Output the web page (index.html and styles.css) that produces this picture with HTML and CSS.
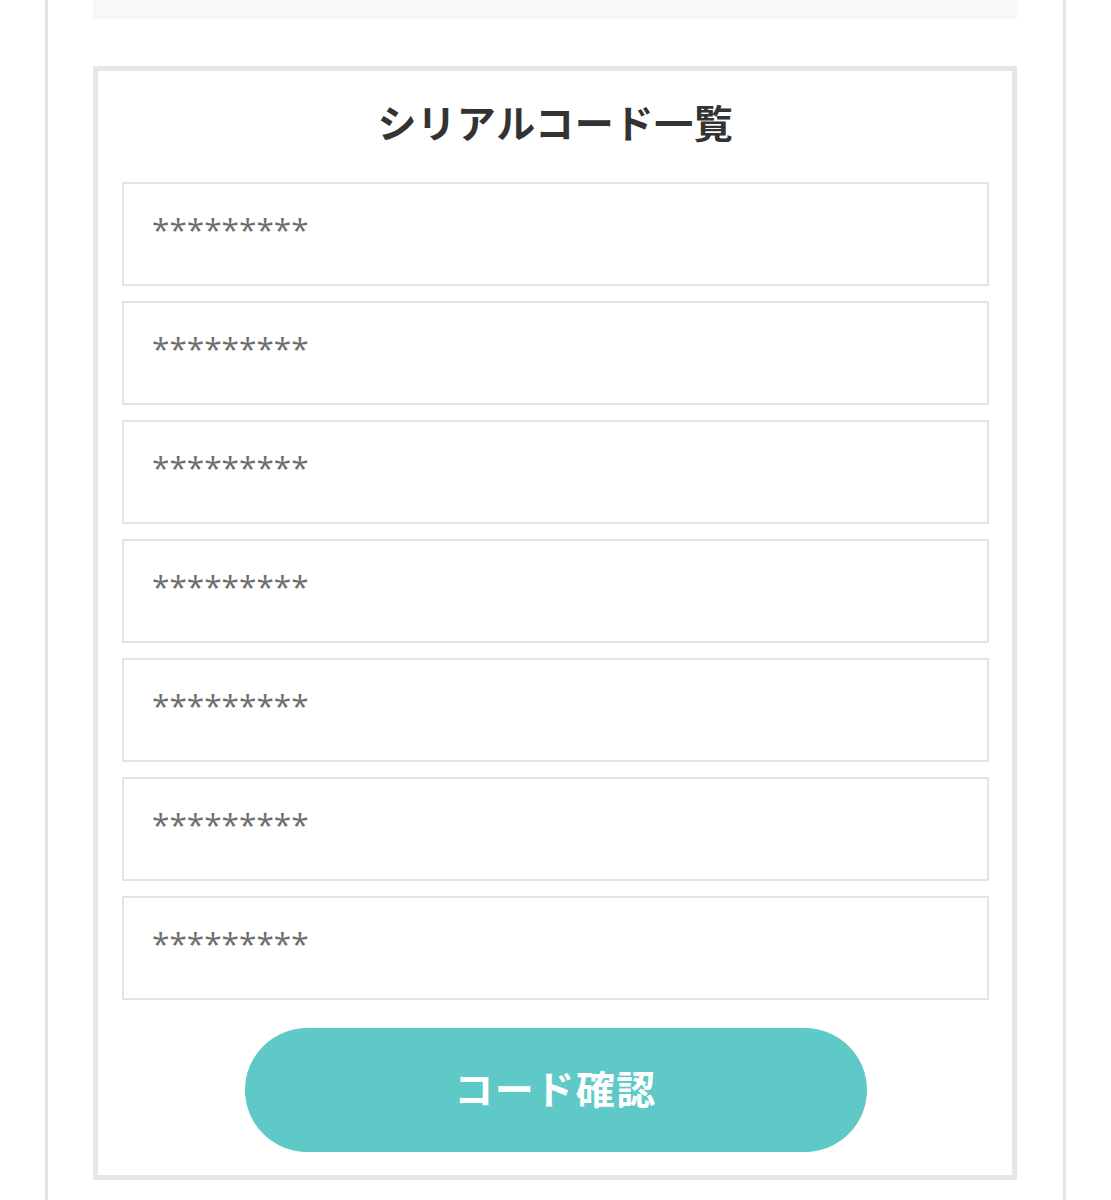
FILE: index.html
```html
<!DOCTYPE html>
<html lang="ja">
<head>
<meta charset="utf-8">
<title>シリアルコード一覧</title>
<link rel="stylesheet" href="styles.css">
</head>
<body>
<div class="page">
  <div class="top-block"></div>
  <section class="card">
    <h2 class="card-title">シリアルコード一覧</h2>
    <div class="codes">
      <input class="code" type="text" placeholder="*********">
      <input class="code" type="text" placeholder="*********">
      <input class="code" type="text" placeholder="*********">
      <input class="code" type="text" placeholder="*********">
      <input class="code" type="text" placeholder="*********">
      <input class="code" type="text" placeholder="*********">
      <input class="code" type="text" placeholder="*********">
    </div>
    <div class="actions">
      <button class="confirm" type="button">コード確認</button>
    </div>
  </section>
</div>
</body>
</html>
```

FILE: styles.css
```css
html, body {
  margin: 0;
  padding: 0;
  background: #ffffff;
}

body {
  font-family: "Noto Sans CJK JP", "Noto Sans", sans-serif;
  color: #333333;
}

.page {
  margin-left: 45px;
  width: 924px;
  min-height: 1200px;
  border-left: 3px solid #e4e4e6;
  border-right: 3px solid #e4e4e6;
  padding: 0 46px 0 45px;
}

.top-block {
  height: 19px;
  background: #f8f8f8;
  margin-bottom: 47px;
}

.card {
  border: 5px solid #e6e6ea;
  padding: 20px 23px 23px 24px;
}

.card-title {
  margin: 0 0 31px;
  text-align: center;
  font-size: 39px;
  line-height: 60px;
  font-weight: 700;
  color: #333333;
  letter-spacing: 0.7px;
}

.codes {
  display: flex;
  flex-direction: column;
  gap: 15px;
}

.code {
  display: block;
  box-sizing: border-box;
  width: 100%;
  height: 104px;
  margin: 0;
  border: 2px solid #e4e4e7;
  border-radius: 0;
  padding: 0 0 11px 28px;
  background: #ffffff;
  font-family: "Open Sans", "Noto Sans", sans-serif;
  font-size: 31.6px;
  color: #6e6e6e;
  outline: none;
}

.code::placeholder {
  color: #6e6e6e;
  opacity: 1;
}

.actions {
  display: flex;
  justify-content: center;
  margin-top: 28px;
}

.confirm {
  width: 622px;
  height: 124px;
  border: none;
  border-radius: 62px;
  background: #5ec9c7;
  color: #ffffff;
  font-family: "Noto Sans CJK JP", "Noto Sans", sans-serif;
  font-size: 39px;
  font-weight: 700;
  letter-spacing: 1.5px;
  padding: 0 0 6px;
  cursor: pointer;
}
```
